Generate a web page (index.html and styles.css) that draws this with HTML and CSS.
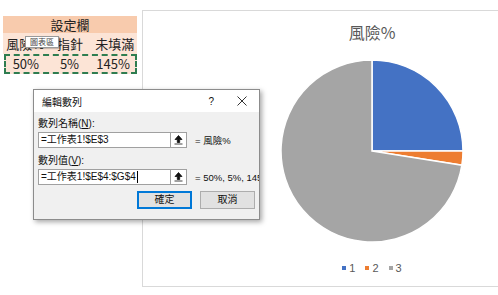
FILE: index.html
```html
<!DOCTYPE html>
<html>
	<head>
		<meta charset="UTF-8">
		<title>編輯數列</title>
		<link rel="stylesheet" href="styles.css">
	</head>

	<body>

		<div class="sheet">
			<div class="row head">設定欄</div>
			<div class="row names">
				<span class="cell">風險%</span>
				<span class="cell">指針</span>
				<span class="cell">未填滿</span>
				<span class="tip">圖表區</span>
			</div>
			<div class="row values">
				<span class="cell">50%</span>
				<span class="cell">5%</span>
				<span class="cell">145%</span>
			</div>
		</div>

		<div class="chart">
			<div class="chart-title">風險%</div>
			<svg class="pie" width="186" height="186" viewBox="0 0 186 186">
				<path d="M93 93 L93 2 A91 91 0 0 1 184 93 Z" fill="#4472c4" stroke="#fff" stroke-width="1.5"/>
				<path d="M93 93 L184 93 A91 91 0 0 1 182.88 107.24 Z" fill="#ed7d31" stroke="#fff" stroke-width="1.5"/>
				<path d="M93 93 L182.88 107.24 A91 91 0 1 1 93 2 Z" fill="#a5a5a5" stroke="#fff" stroke-width="1.5"/>
			</svg>
			<div class="legend">
				<span class="key"><i class="swatch blue"></i>1</span>
				<span class="key"><i class="swatch orange"></i>2</span>
				<span class="key"><i class="swatch gray"></i>3</span>
			</div>
		</div>

		<div class="dialog">
			<div class="titlebar">
				<span class="caption">編輯數列</span>
				<span class="help">?</span>
				<svg class="close" width="10" height="10" viewBox="0 0 10 10">
					<path d="M0.5 0.5 L9.5 9.5 M9.5 0.5 L0.5 9.5" stroke="#333" stroke-width="1"/>
				</svg>
			</div>
			<div class="dialog-body">
				<div class="label">數列名稱(<u>N</u>):</div>
				<div class="field-row">
					<div class="field">=工作表1!$E$3</div>
					<div class="pick"><svg width="9" height="10" viewBox="0 0 9 10"><path d="M4.5 0.5 L8 4.5 H5.7 V7.5 H3.3 V4.5 H1 Z M0.5 9 H8.5" fill="#111" stroke="#111" stroke-width="0.8"/></svg></div>
					<div class="preview">= 風險%</div>
				</div>
				<div class="label">數列值(<u>V</u>):</div>
				<div class="field-row">
					<div class="field">=工作表1!$E$4:$G$4<span class="caret"></span></div>
					<div class="pick"><svg width="9" height="10" viewBox="0 0 9 10"><path d="M4.5 0.5 L8 4.5 H5.7 V7.5 H3.3 V4.5 H1 Z M0.5 9 H8.5" fill="#111" stroke="#111" stroke-width="0.8"/></svg></div>
					<div class="preview">= 50%, 5%, 145%</div>
				</div>
				<div class="buttons">
					<div class="btn ok">確定</div>
					<div class="btn">取消</div>
				</div>
			</div>
		</div>

	</body>

</html>
```

FILE: styles.css
```css
* { margin: 0; padding: 0; box-sizing: border-box }

body {
	width: 498px;
	height: 295px;
	overflow: hidden;
	position: relative;
	background: #fff;
	font-family: "Noto Sans CJK TC", "Noto Sans", sans-serif;
	color: #222;
}

/* spreadsheet cells */
.sheet {
	margin: 16px 0 0 3px;
	width: 134px;
	font-size: 13px;
}

.row {
	display: flex;
	align-items: center;
	position: relative;
	background: #fce4d6;
}

.head {
	height: 17px;
	justify-content: center;
	background: #f8cbad;
}

.names { height: 21px }

.values {
	height: 20px;
	border: 2px dashed #2e7d50;
	margin-left: 1px;
}

.cell {
	flex: 1;
	text-align: center;
	line-height: 16px;
}

.values .cell:first-child { margin-left: -2px }

.tip {
	position: absolute;
	left: 22px;
	top: 3px;
	width: 34px;
	height: 12px;
	background: #fff;
	border: 1px solid #9a9a9a;
	font-size: 8px;
	line-height: 10px;
	text-align: center;
	color: #444;
	box-shadow: 1px 1px 1px rgba(0,0,0,.2);
}

/* chart area */
.chart {
	position: absolute;
	left: 142px;
	top: 10px;
	width: 460px;
	height: 277px;
	border: 1px solid #d9d9d9;
	display: flex;
	flex-direction: column;
	align-items: center;
}

.chart-title {
	margin-top: 11px;
	font-size: 16px;
	line-height: 20px;
	color: #595959;
}

.pie { margin-top: 16px }

.legend {
	margin-top: 17px;
	display: flex;
	gap: 10px;
	font-family: "Liberation Sans", sans-serif;
	font-size: 11px;
	line-height: 14px;
	color: #595959;
}

.key {
	display: flex;
	align-items: center;
	gap: 3px;
}

.swatch {
	width: 4px;
	height: 4px;
}

.blue { background: #4472c4 }
.orange { background: #ed7d31 }
.gray { background: #a5a5a5 }

/* edit series dialog */
.dialog {
	position: absolute;
	left: 33px;
	top: 89px;
	width: 227px;
	height: 131px;
	border: 1px solid #8c8c8c;
	background: #f0f0f0;
	box-shadow: 2px 2px 5px rgba(0,0,0,.35);
	font-family: "Liberation Sans", "Noto Sans CJK TC", sans-serif;
	font-size: 10px;
	color: #111;
	overflow: hidden;
}

.titlebar {
	height: 22px;
	background: #fff;
	display: flex;
	align-items: center;
	padding-left: 8px;
}

.caption { flex: 1 }

.help {
	font-size: 10px;
	margin-right: 23px;
}

.close { margin-right: 12px }

.dialog-body { padding: 5px 0 0 4px }

.label { line-height: 14px }

.field-row {
	display: flex;
	align-items: center;
	margin: 1px 0 6px;
	white-space: nowrap;
}

.field {
	flex: none;
	width: 133px;
	height: 16px;
	background: #fff;
	border: 1px solid #a0a0a0;
	padding-left: 2px;
	line-height: 14px;
	display: flex;
	align-items: center;
}

.caret {
	width: 1px;
	height: 12px;
	background: #000;
	margin-left: 1px;
}

.pick {
	flex: none;
	width: 16px;
	height: 16px;
	border: 1px solid #a0a0a0;
	border-left: none;
	background: #fff;
	display: flex;
	align-items: center;
	justify-content: center;
}

.preview {
	margin-left: 8px;
	font-size: 9.5px;
}

.buttons {
	display: flex;
	gap: 8px;
	padding-left: 99px;
	margin-top: 3px;
}

.btn {
	width: 55px;
	height: 18px;
	background: #e1e1e1;
	border: 1px solid #adadad;
	text-align: center;
	line-height: 16px;
}

.ok { border-color: #0078d7; border-width: 2px; line-height: 14px }
```
